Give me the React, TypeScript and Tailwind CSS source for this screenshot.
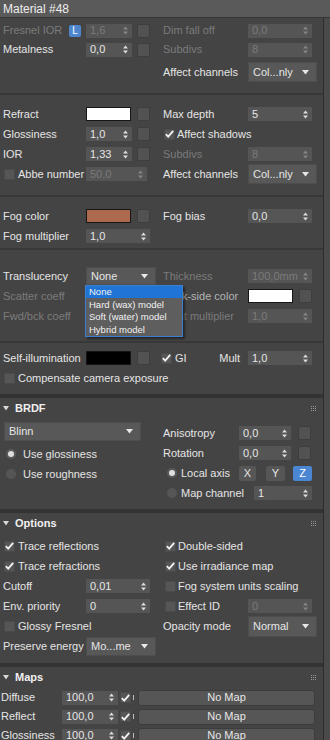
import React from "react";

const DIS = "text-[#7b7b7b]";

function Arrows({ off }: { off?: boolean }) {
  return (
    <svg width="5" height="9" viewBox="0 0 5 9" className="shrink-0">
      <polygon points="0,3.6 2.5,0.6 5,3.6" fill={off ? "#858585" : "#dcdcdc"} />
      <polygon points="0,5.4 2.5,8.4 5,5.4" fill={off ? "#858585" : "#dcdcdc"} />
    </svg>
  );
}

function Spin({ v, w, off }: { v: string; w: string; off?: boolean }) {
  return (
    <div
      className={`${w} h-[14px] shrink-0 bg-[#555555] flex items-center justify-between pl-[4px] pr-[4px] ${off ? DIS : "text-[#e6e6e6]"}`}
    >
      <span className="leading-none">{v}</span>
      <Arrows off={off} />
    </div>
  );
}

function MapSq({ className = "" }: { className?: string }) {
  return <div className={`w-[13px] h-[14px] shrink-0 rounded-[2px] bg-[#525252] border border-[#3e3e3e] ${className}`} />;
}

function Swatch({ color }: { color: string }) {
  return <div className={`w-[45px] h-[14px] shrink-0 border border-[#161616] ${color}`} />;
}

function Drop({ v, w, h = "h-[20px]" }: { v: string; w: string; h?: string }) {
  return (
    <div className={`${w} ${h} shrink-0 bg-[#585858] border border-[#4d4d4d] flex items-center justify-between pl-[4px] pr-[7px] text-[#e6e6e6]`}>
      <span className="leading-none">{v}</span>
      <svg width="7" height="5" viewBox="0 0 7 5">
        <polygon points="0,0 7,0 3.5,4.5" fill="#e8e8e8" />
      </svg>
    </div>
  );
}

function Check({ on, className = "" }: { on?: boolean; className?: string }) {
  return (
    <div className={`w-[11px] h-[11px] shrink-0 bg-[#565656] border border-[#4a4a4a] flex items-center justify-center ${className}`}>
      {on && (
        <svg width="9" height="8" viewBox="0 0 9 8">
          <path d="M0.8 4.2 L3.2 6.6 L8.2 0.8" stroke="#f2f2f2" strokeWidth="1.8" fill="none" />
        </svg>
      )}
    </div>
  );
}

function Radio({ on, className = "" }: { on?: boolean; className?: string }) {
  return <div className={`w-[10px] h-[10px] shrink-0 rounded-full ${on ? "bg-[#dedede] border-2 border-[#5a5a5a]" : "bg-[#555555]"} ${className}`} />;
}

function Row({ left, right, h = "h-[20px]", className = "" }: { left?: React.ReactNode; right?: React.ReactNode; h?: string; className?: string }) {
  return (
    <div className={`flex ${h} ${className}`}>
      <div className="w-[160px] flex items-center">{left}</div>
      <div className="flex-1 flex items-center">{right}</div>
    </div>
  );
}

function LLabel({ t, off }: { t: string; off?: boolean }) {
  return <div className={`w-[86px] shrink-0 pl-[3px] whitespace-nowrap ${off ? DIS : ""}`}>{t}</div>;
}

function RLabel({ t, off, w = "w-[88px]" }: { t: string; off?: boolean; w?: string }) {
  return <div className={`${w} shrink-0 pl-[3px] whitespace-nowrap ${off ? DIS : ""}`}>{t}</div>;
}

function Divider() {
  return <div className="h-[2px] bg-[#383838]" />;
}

function Band() {
  return <div className="h-[4px] bg-[#333333]" />;
}

function Header({ t }: { t: string }) {
  return (
    <div className="h-[20px] flex items-center">
      <svg width="6" height="5" viewBox="0 0 6 5" className="ml-[3px]">
        <polygon points="0,0 6,0 3,4.5" fill="#d8d8d8" />
      </svg>
      <span className="ml-[6px] font-bold text-[#f0f0f0]">{t}</span>
      <div className="ml-auto mr-[7px] grid grid-cols-3 gap-[1px]">
        {Array.from({ length: 9 }).map((_, i) => (
          <div key={i} className="w-[1px] h-[1px] bg-[#9a9a9a]" />
        ))}
      </div>
    </div>
  );
}

function MapRow({ t }: { t: string }) {
  return (
    <div className="h-[19px] flex items-center">
      <div className="w-[62px] pl-[1px] whitespace-nowrap">{t}</div>
      <Spin v="100,0" w="w-[56px]" />
      <Check on className="ml-[2px]" />
      <div className="ml-[2px] w-px h-[5px] bg-[#bdbdbd]" />
      <div className="ml-[4px] mr-[8px] flex-1 h-[16px] rounded-[3px] bg-[#565656] border border-[#3c3c3c] flex items-center justify-center text-[#e6e6e6]">
        No Map
      </div>
    </div>
  );
}

export default function App() {
  return (
    <div
      className="w-[330px] h-[740px] overflow-hidden bg-[#444444] text-[#e4e4e4] text-[11px]"
      style={{ fontFamily: '"Liberation Sans", Arial, sans-serif' }}
    >
      <div className="h-[18px] bg-[#5a5a5a] border-b border-[#343434] flex items-center pl-[3px] text-[12px] text-[#eeeeee]">
        Material #48
      </div>
      <div className="flex h-[722px] overflow-hidden">
        <div className="w-[323px]">
          {/* basic params */}
          <div className="pt-[3px] pb-[10px]">
            <Row
              h="h-[19px]"
              left={
                <>
                  <div className={`w-[69px] pl-[3px] whitespace-nowrap ${DIS}`}>Fresnel IOR</div>
                  <div className="w-[12px] h-[12px] rounded-[2px] bg-[#4d86cf] text-white text-[10px] flex items-center justify-center">L</div>
                  <Spin v="1,6" w="w-[46px] ml-[5px]" off />
                  <MapSq className="ml-[5px]" />
                </>
              }
              right={
                <>
                  <RLabel t="Dim fall off" off />
                  <Spin v="0,0" w="w-[64px]" off />
                </>
              }
            />
            <Row
              h="h-[19px]"
              left={
                <>
                  <LLabel t="Metalness" />
                  <Spin v="0,0" w="w-[46px]" />
                  <MapSq className="ml-[5px]" />
                </>
              }
              right={
                <>
                  <RLabel t="Subdivs" off />
                  <Spin v="8" w="w-[64px]" off />
                </>
              }
            />
            <Row
              h="h-[22px]"
              className="mt-[2px]"
              right={
                <>
                  <RLabel t="Affect channels" />
                  <Drop v="Col...nly" w="w-[69px]" />
                </>
              }
            />
          </div>
          <Divider />
          {/* refraction */}
          <div className="pt-[9px] pb-[11px]">
            <Row
              left={
                <>
                  <LLabel t="Refract" />
                  <Swatch color="bg-white" />
                  <MapSq className="ml-[6px]" />
                </>
              }
              right={
                <>
                  <RLabel t="Max depth" />
                  <Spin v="5" w="w-[64px]" />
                </>
              }
            />
            <Row
              left={
                <>
                  <LLabel t="Glossiness" />
                  <Spin v="1,0" w="w-[46px]" />
                  <MapSq className="ml-[5px]" />
                </>
              }
              right={
                <>
                  <Check on className="ml-[4px]" />
                  <span className="ml-[2px]">Affect shadows</span>
                </>
              }
            />
            <Row
              left={
                <>
                  <LLabel t="IOR" />
                  <Spin v="1,33" w="w-[46px]" />
                  <MapSq className="ml-[5px]" />
                </>
              }
              right={
                <>
                  <RLabel t="Subdivs" off />
                  <Spin v="8" w="w-[64px]" off />
                </>
              }
            />
            <Row
              left={
                <>
                  <Check className="ml-[4px]" />
                  <div className="w-[71px] pl-[3px] whitespace-nowrap">Abbe number</div>
                  <Spin v="50,0" w="w-[61px]" off />
                </>
              }
              right={
                <>
                  <RLabel t="Affect channels" />
                  <Drop v="Col...nly" w="w-[69px]" />
                </>
              }
            />
          </div>
          <Divider />
          {/* fog */}
          <div className="pt-[9px] pb-[2px]">
            <Row
              left={
                <>
                  <LLabel t="Fog color" />
                  <Swatch color="bg-[#ad6a4f]" />
                  <MapSq className="ml-[6px]" />
                </>
              }
              right={
                <>
                  <RLabel t="Fog bias" />
                  <Spin v="0,0" w="w-[64px]" />
                </>
              }
            />
            <Row
              left={
                <>
                  <LLabel t="Fog multiplier" />
                  <Spin v="1,0" w="w-[64px]" />
                </>
              }
            />
          </div>
          <Divider />
          {/* translucency */}
          <div className="relative pt-[16px] pb-[15px]">
            <Row
              left={
                <>
                  <LLabel t="Translucency" />
                  <Drop v="None" w="w-[70px]" h="h-[18px]" />
                </>
              }
              right={
                <>
                  <RLabel t="Thickness" off />
                  <Spin v="100,0mm" w="w-[64px]" off />
                </>
              }
            />
            <Row
              left={<LLabel t="Scatter coeff" off />}
              right={
                <>
                  <RLabel t="Back-side color" w="w-[88px] text-[#b4b4b4]" />
                  <Swatch color="bg-white" />
                  <MapSq className="ml-[6px]" />
                </>
              }
            />
            <Row
              left={<LLabel t="Fwd/bck coeff" off />}
              right={
                <>
                  <RLabel t="Light multiplier" off />
                  <Spin v="1,0" w="w-[64px]" off />
                </>
              }
            />
            <div className="absolute left-[85px] top-[35px] w-[98px] h-[52px] bg-[#5e5e5e] border border-[#3b80d0] shadow-[2px_2px_2px_rgba(0,0,0,0.45)] text-[9.5px] text-[#f2f2f2] leading-none">
              <div className="h-[12px] bg-[#1f74d6] flex items-center pl-[3px]">None</div>
              <div className="h-[13px] flex items-center pl-[3px]">Hard (wax) model</div>
              <div className="h-[12px] flex items-center pl-[3px]">Soft (water) model</div>
              <div className="h-[13px] flex items-center pl-[3px]">Hybrid model</div>
            </div>
          </div>
          <Divider />
          {/* self illumination */}
          <div className="pt-[5px] pb-[6px]">
            <Row
              left={
                <>
                  <LLabel t="Self-illumination" />
                  <Swatch color="bg-black" />
                  <MapSq className="ml-[6px]" />
                </>
              }
              right={
                <>
                  <Check on className="ml-[1px]" />
                  <span className="ml-[3px]">GI</span>
                  <span className="ml-auto mr-[8px]">Mult</span>
                  <Spin v="1,0" w="w-[64px] mr-[11px]" />
                </>
              }
            />
            <Row
              left={
                <>
                  <Check className="ml-[4px]" />
                  <span className="ml-[3px] whitespace-nowrap">Compensate camera exposure</span>
                </>
              }
            />
          </div>
          <Band />
          <Header t="BRDF" />
          <div className="h-[91px] flex">
            <div className="w-[160px] flex flex-col">
              <div className="ml-[4px] mt-[4px]">
                <Drop v="Blinn" w="w-[137px]" h="h-[19px]" />
              </div>
              <div className="mt-[3px] h-[20px] flex items-center">
                <Radio on className="ml-[6px]" />
                <span className="ml-[7px]">Use glossiness</span>
              </div>
              <div className="h-[20px] flex items-center">
                <Radio className="ml-[6px]" />
                <span className="ml-[7px]">Use roughness</span>
              </div>
            </div>
            <div className="flex-1 flex flex-col pt-[5px]">
              <div className="h-[20px] flex items-center">
                <RLabel t="Anisotropy" w="w-[79px]" />
                <Spin v="0,0" w="w-[52px]" />
                <MapSq className="ml-[7px]" />
              </div>
              <div className="h-[20px] flex items-center">
                <RLabel t="Rotation" w="w-[79px]" />
                <Spin v="0,0" w="w-[52px]" />
                <MapSq className="ml-[7px]" />
              </div>
              <div className="h-[20px] flex items-center">
                <Radio on className="ml-[7px]" />
                <span className="ml-[4px] w-[58px]">Local axis</span>
                <div className="w-[17px] h-[15px] rounded-[2px] bg-[#565656] flex items-center justify-center">X</div>
                <div className="ml-[10px] w-[19px] h-[15px] rounded-[2px] bg-[#565656] flex items-center justify-center">Y</div>
                <div className="ml-[8px] w-[19px] h-[15px] rounded-[2px] bg-[#4a86d2] flex items-center justify-center text-white">Z</div>
              </div>
              <div className="h-[20px] flex items-center">
                <Radio className="ml-[7px]" />
                <span className="ml-[4px] w-[73px] whitespace-nowrap">Map channel</span>
                <Spin v="1" w="w-[58px]" />
              </div>
            </div>
          </div>
          <Band />
          <Header t="Options" />
          <div className="pt-[3px] pb-[7px]">
            <Row
              left={
                <>
                  <Check on className="ml-[4px]" />
                  <span className="ml-[3px]">Trace reflections</span>
                </>
              }
              right={
                <>
                  <Check on className="ml-[5px]" />
                  <span className="ml-[2px]">Double-sided</span>
                </>
              }
            />
            <Row
              left={
                <>
                  <Check on className="ml-[4px]" />
                  <span className="ml-[3px]">Trace refractions</span>
                </>
              }
              right={
                <>
                  <Check on className="ml-[5px]" />
                  <span className="ml-[2px]">Use irradiance map</span>
                </>
              }
            />
            <Row
              left={
                <>
                  <LLabel t="Cutoff" />
                  <Spin v="0,01" w="w-[64px]" />
                </>
              }
              right={
                <>
                  <Check className="ml-[5px]" />
                  <span className="ml-[2px] whitespace-nowrap">Fog system units scaling</span>
                </>
              }
            />
            <Row
              left={
                <>
                  <LLabel t="Env. priority" />
                  <Spin v="0" w="w-[64px]" />
                </>
              }
              right={
                <>
                  <Check className="ml-[5px]" />
                  <span className="ml-[2px] w-[70px]">Effect ID</span>
                  <Spin v="0" w="w-[64px]" off />
                </>
              }
            />
            <Row
              left={
                <>
                  <Check className="ml-[4px]" />
                  <span className="ml-[3px]">Glossy Fresnel</span>
                </>
              }
              right={
                <>
                  <RLabel t="Opacity mode" />
                  <Drop v="Normal" w="w-[69px]" h="h-[21px]" />
                </>
              }
            />
            <Row
              left={
                <>
                  <LLabel t="Preserve energy" />
                  <Drop v="Mo...me" w="w-[70px]" h="h-[19px]" />
                </>
              }
            />
          </div>
          <Band />
          <Header t="Maps" />
          <div className="pt-[1px]">
            <MapRow t="Diffuse" />
            <MapRow t="Reflect" />
            <MapRow t="Glossiness" />
          </div>
        </div>
        <div className="w-px bg-[#2c2c2c]" />
        <div className="flex-1 bg-[#4a4a4a]" />
      </div>
    </div>
  );
}
